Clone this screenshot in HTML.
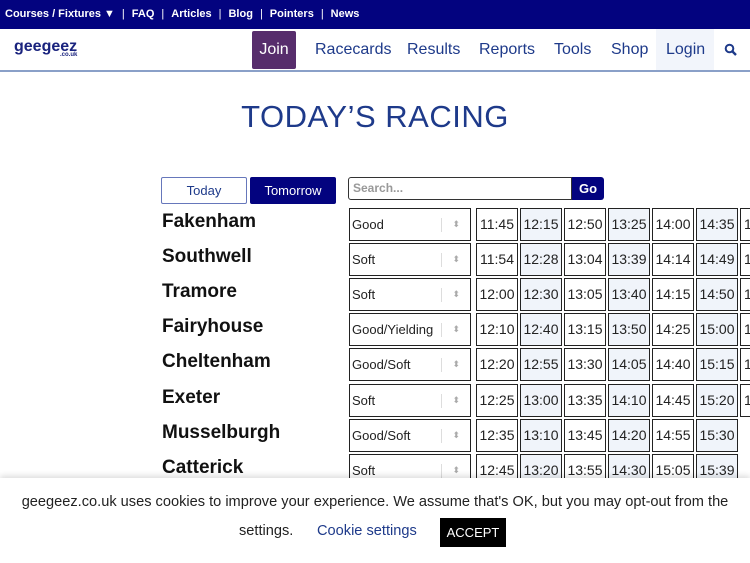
<!DOCTYPE html>
<html><head><meta charset="utf-8"><style>
*{margin:0;padding:0;box-sizing:border-box}
body{width:750px;height:563px;overflow:hidden;background:#fff;font-family:"Liberation Sans",sans-serif;position:relative}
.top{position:absolute;left:0;top:0;width:750px;height:29px;background:#03037f;color:#fff;font-size:11px;font-weight:bold;line-height:29px;padding-left:5px;white-space:nowrap}
.top span.s{margin:0 7px;font-weight:normal}
.hdr{position:absolute;left:0;top:29px;width:750px;height:43px;border-bottom:2px solid #8aa0c8}
.logo{position:absolute;left:14px;top:9px;color:#1a237e;font-weight:bold;font-size:16px;letter-spacing:0}
.logo small{position:absolute;left:46px;top:14px;font-size:6px;color:#1a237e}
.nav{position:absolute;top:0;height:41px;line-height:41px;font-size:16px;color:#1e3a8a}
.join{position:absolute;left:252px;top:2px;width:44px;height:38px;background:#572d6c;color:#fff;font-size:16px;line-height:38px;text-align:center;border-radius:2px}
.login{position:absolute;left:656px;top:0;width:58px;height:41px;background:#f2f5fb}
h1{position:absolute;left:0;width:750px;top:99px;text-align:center;font-weight:normal;font-size:31px;color:#1e3a8a;letter-spacing:0.5px}
.btn{position:absolute;top:177px;height:27px;font-size:13px;line-height:25px;text-align:center;border:1px solid #03037f;border-radius:2px}
.search{position:absolute;left:348px;top:177px;width:224px;height:23px;border:1px solid #333;border-radius:3px 0 0 3px;font-size:12px;color:#999;font-weight:bold;padding-left:4px;line-height:21px}
.go{position:absolute;left:572px;top:177px;width:32px;height:23px;background:#03037f;color:#fff;font-size:13px;font-weight:bold;text-align:center;line-height:23px;border-radius:0 3px 3px 0}
.course{position:absolute;left:162px;font-size:19px;font-weight:bold;color:#111}
.sel{position:absolute;left:349px;width:122px;height:33px;border:1px solid #222;font-size:13px;line-height:31px;padding-left:2px;color:#222}
.sel:after{content:"⬍";position:absolute;right:10px;top:0;font-size:9px;color:#aaa}
.sel:before{content:"";position:absolute;right:28px;top:9px;height:14px;border-left:1px solid #ddd}
.t{position:absolute;width:42px;height:33px;border:1px solid #222;font-size:14px;line-height:31px;text-align:center;color:#222;background:#fff}
.t.a{background:#f0f4fa}
.cookie{position:absolute;left:0;top:478px;width:750px;height:85px;background:#fff;box-shadow:0 -2px 6px rgba(0,0,0,.15);font-size:14.6px;color:#222;text-align:center}
</style></head><body>
<div class="top">Courses / Fixtures ▼<span class="s">|</span>FAQ<span class="s">|</span>Articles<span class="s">|</span>Blog<span class="s">|</span>Pointers<span class="s">|</span>News</div>
<div class="hdr">
<div class="logo">geegeez<small>.co.uk</small></div>
<div class="join">Join</div>
<div class="login"></div>
<div class="nav" style="left:315px">Racecards</div>
<div class="nav" style="left:407px">Results</div>
<div class="nav" style="left:479px">Reports</div>
<div class="nav" style="left:554px">Tools</div>
<div class="nav" style="left:611px">Shop</div>
<div class="nav" style="left:666px">Login</div>
<svg style="position:absolute;left:724px;top:14px" width="14" height="14" viewBox="0 0 14 14"><circle cx="5.5" cy="5.5" r="3.8" fill="none" stroke="#1e3a8a" stroke-width="2"/><line x1="8.5" y1="8.5" x2="12" y2="12" stroke="#1e3a8a" stroke-width="2.4"/></svg>
</div>
<h1>TODAY’S RACING</h1>
<div class="btn" style="left:161px;width:86px;color:#1e3a8a;border-color:#6677bb">Today</div>
<div class="btn" style="left:250px;width:86px;background:#03037f;color:#fff">Tomorrow</div>
<div class="search">Search...</div><div class="go">Go</div>
<div id="rows"></div>
<script>
var d=[["Fakenham","Good",["11:45","12:15","12:50","13:25","14:00","14:35","1"]],
["Southwell","Soft",["11:54","12:28","13:04","13:39","14:14","14:49","1"]],
["Tramore","Soft",["12:00","12:30","13:05","13:40","14:15","14:50","1"]],
["Fairyhouse","Good/Yielding",["12:10","12:40","13:15","13:50","14:25","15:00","1"]],
["Cheltenham","Good/Soft",["12:20","12:55","13:30","14:05","14:40","15:15","1"]],
["Exeter","Soft",["12:25","13:00","13:35","14:10","14:45","15:20","1"]],
["Musselburgh","Good/Soft",["12:35","13:10","13:45","14:20","14:55","15:30"]],
["Catterick","Soft",["12:45","13:20","13:55","14:30","15:05","15:39"]]];
var h="";d.forEach(function(r,i){var y=208+i*35.1;
h+='<div class="course" style="top:'+(y+3)+'px">'+r[0]+'</div><div class="sel" style="top:'+y+'px">'+r[1]+'</div>';
r[2].forEach(function(t,j){h+='<div class="t'+(j%2?' a':'')+'" style="left:'+(476+j*44)+'px;top:'+y+'px;'+(j==6?'text-align:left;padding-left:3px':'')+'">'+t+'</div>';});});
document.getElementById("rows").innerHTML=h;
</script>
<div class="cookie">
<div style="position:absolute;left:0;width:750px;top:16px;white-space:nowrap">geegeez.co.uk uses cookies to improve your experience. We assume that's OK, but you may opt-out from the</div>
<div style="position:absolute;left:239px;top:45px">settings.</div>
<div style="position:absolute;left:317px;top:45px;color:#1e3a8a">Cookie settings</div>
<div style="position:absolute;left:440px;top:40px;width:66px;height:29px;background:#000;color:#fff;font-size:13px;line-height:29px">ACCEPT</div>
</div>
</body></html>
